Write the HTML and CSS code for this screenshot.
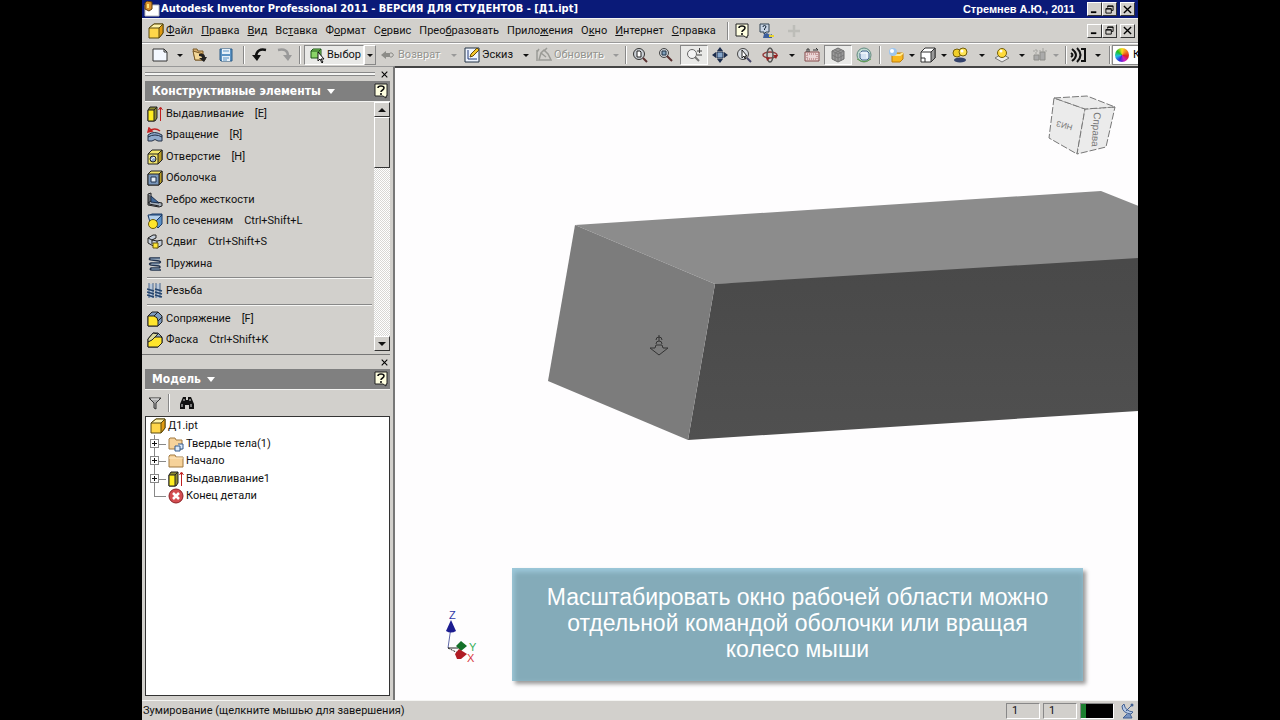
FILE: index.html
```html
<!DOCTYPE html>
<html lang="ru">
<head>
<meta charset="utf-8">
<title>Autodesk Inventor Professional 2011</title>
<link rel="stylesheet" href="styles.css">
</head>
<body>
<svg class="defs" aria-hidden="true">
  <symbol id="part" viewBox="0 0 16 16"><path d="M1 5l5-4h9v9l-4 5H1z" fill="#ffd64a" stroke="#5a4a10"/><path d="M1 5l5-4h9l-4 4z" fill="#fff3a8" stroke="#5a4a10"/><path d="M11 5l4-4v9l-4 5z" fill="#e09a10" stroke="#5a4a10"/></symbol>
  <symbol id="extrude" viewBox="0 0 16 16"><path d="M1 4l2-3h7v11l-2 3H1z" fill="#8d8a30" stroke="#222"/><path d="M1 4h6v11H1z" fill="#ffee20" stroke="#222"/><path d="M7 4l3-3" stroke="#222"/><path d="M13.500 15V2M11.500 4l2-3 2 3" fill="none" stroke="#c02020"/></symbol>
  <symbol id="help" viewBox="0 0 14 16"><path d="M1 1h12v12h-1v2l-3-2H1z" fill="#ffffe0" stroke="#222"/><path d="M4 5q0-2 3-2t3 2q0 1-2 2.500Q7 8 7 9M7 10v2" fill="none" stroke="#111" stroke-width="1.600"/></symbol>
  <symbol id="min" viewBox="0 0 10 10"><path d="M1 8h6" stroke="#000" stroke-width="2"/></symbol>
  <symbol id="restore" viewBox="0 0 10 10"><path d="M3 3V1h6v5H7M3 1.500h6M1 4h6v5H1zM1 4.500h6" fill="none" stroke="#000"/></symbol>
  <symbol id="close" viewBox="0 0 10 10"><path d="M1 1l8 8M9 1L1 9" stroke="#000" stroke-width="1.500"/></symbol>
  <symbol id="folder" viewBox="0 0 16 16"><path d="M1 3l1-1h5l1 2h7v10H1z" fill="#f6d29a" stroke="#a07840"/><path d="M1 5h14" stroke="#ffe9c4"/></symbol>
</svg>
<div class="app">
  <header class="titlebar">
    <svg class="i16" viewBox="0 0 16 16"><path d="M1 4h14v11H1z" fill="#fff" stroke="#bbb"/><path d="M1 2l2-2 5 1v7l-3 2-4-2z" fill="#d9902c" stroke="#5b3a10"/><path d="M3 3h2v4H3z" fill="#ffe27a"/></svg>
    <h1>Autodesk Inventor Professional 2011 - ВЕРСИЯ ДЛЯ СТУДЕНТОВ - [Д1.ipt]</h1>
    <span class="author">Стремнев А.Ю., 2011</span>
    <div class="winbtns">
      <button aria-label="Свернуть"><svg><use href="#min"/></svg></button><button aria-label="Восстановить"><svg><use href="#restore"/></svg></button><button class="last" aria-label="Закрыть"><svg><use href="#close"/></svg></button>
    </div>
  </header>

  <nav class="menubar">
    <svg class="i16"><use href="#part"/></svg>
    <div class="menus">
      <button><u>Ф</u>айл</button><button><u>П</u>равка</button><button><u>В</u>ид</button><button>Вс<u>т</u>авка</button><button>Ф<u>о</u>рмат</button><button>С<u>е</u>рвис</button><button>Прео<u>б</u>разовать</button><button>Прило<u>ж</u>ения</button><button>О<u>к</u>но</button><button><u>И</u>нтернет</button><button><u>С</u>правка</button>
    </div>
    <i class="sep"></i>
    <button class="w20" aria-label="Справка"><svg class="i16"><use href="#help"/></svg></button>
    <button class="w28" aria-label="Поиск справки"><svg class="i16" viewBox="0 0 16 16"><path d="M2 1h9v8H8l-2 2V9H2z" fill="#c8d4e4" stroke="#345"/><path d="M5 4q0-1.500 1.500-1.500T8 4L6.500 6v1" fill="none" stroke="#123"/><path d="M5 15l1-4 3-1 3 2 2-1v4z" fill="#3d5f9c"/><path d="M11 13h5" stroke="#e8d430" stroke-width="2"/></svg></button>
    <button class="w28" aria-label="Добавить" disabled><svg class="i16" viewBox="0 0 16 16"><path d="M8 2v12M2 8h12" stroke="#bdbdb8" stroke-width="2.500"/></svg></button>
    <div class="winbtns push">
      <button aria-label="Свернуть документ"><svg><use href="#min"/></svg></button><button aria-label="Восстановить документ"><svg><use href="#restore"/></svg></button><button class="last" aria-label="Закрыть документ"><svg><use href="#close"/></svg></button>
    </div>
  </nav>

  <div class="toolbar" role="toolbar">
    <button class="w24" aria-label="Создать"><svg class="i16" viewBox="0 0 16 16"><path d="M1 2h11l3 3v9H1z" fill="#f4f8ff" stroke="#333"/><path d="M12 2v3h3" fill="none" stroke="#333"/></svg></button>
    <button class="w16 arr" aria-label="Варианты создания"></button>
    <button class="w24" aria-label="Открыть"><svg class="i16" viewBox="0 0 16 16"><path d="M1 2h4l1 2h5v3l2 6H3z" fill="#d8b070" stroke="#7a5a28"/><path d="M3 13L1 4l10 3 2 6z" fill="#f4d898" stroke="#7a5a28"/><path d="M7 7q6-1 6 3h2l-3 5-5-4h3q0-2-3-2z" fill="#222"/></svg></button>
    <button class="w28" aria-label="Сохранить"><svg class="i16" viewBox="0 0 16 16"><path d="M2 2h12v12H3l-1-1z" fill="#5b93c4" stroke="#2c5c88"/><path d="M4 2h8v5H4zM4 9h8v5H4z" fill="#e6f0f8"/><path d="M5 4h6M5 11h6M5 13h4" stroke="#5b93c4"/></svg></button>
    <i class="sep"></i>
    <button class="w24" aria-label="Отменить"><svg class="i16" viewBox="0 0 16 16"><path d="M14 3Q5 1 4 9" fill="none" stroke="#111" stroke-width="2.500"/><path d="M0 8h9l-4 6z" fill="#111"/></svg></button>
    <button class="w24" aria-label="Повторить" disabled><svg class="i16" viewBox="0 0 16 16"><path d="M2 3q10-2 10 6" fill="none" stroke="#999" stroke-width="2.500"/><path d="M7 8h9l-4 6z" fill="#999"/></svg></button>
    <i class="sep"></i>
    <button class="w60 on txt"><svg class="i16" viewBox="0 0 16 16"><path d="M2 4l2-2h8v7l-2 2H2z" fill="#8ad468" stroke="#1b5515"/><path d="M2 4h8v7M10 4l2-2" fill="none" stroke="#1b5515"/><path d="M9 5v9l2-2 2 4 1-1-2-3h3z" fill="#fff" stroke="#111"/></svg>Выбор</button>
    <button class="w12 arr raised" aria-label="Варианты выбора"></button>
    <button class="w72 txt" disabled><svg class="i16" viewBox="0 0 16 16"><path d="M1 8l5-4v2h4v4H6v2z" fill="#8c8c88"/><path d="M10 6h2q3 2 0 4h-2" fill="none" stroke="#8c8c88"/></svg>Возврат</button>
    <button class="w12 arr" aria-label="Варианты возврата" disabled></button>
    <button class="w60 txt"><svg class="i16" viewBox="0 0 16 16"><path d="M1 1h14v14H1z" fill="#eef4ff" stroke="#234"/><path d="M4 3v9h9" fill="none" stroke="#223a78"/><path d="M6 10l1-3 6-6 2 2-6 6z" fill="#f7c72c" stroke="#654b08"/></svg>Эскиз</button>
    <button class="w12 arr" aria-label="Варианты эскиза"></button>
    <button class="w76 txt" disabled><svg class="i16" viewBox="0 0 16 16"><path d="M1 3v11M3 13l2-7 3-3 4 4 3 6zH3M5 6l5 4M9 3l2-2M3 2L1 5" fill="none" stroke="#9b9b96" stroke-width="1.500"/></svg>Обновить</button>
    <button class="w16 arr" aria-label="Варианты обновления" disabled></button>
    <i class="sep s4"></i>
    <button class="w24" aria-label="Показать все"><svg class="i16" viewBox="0 0 16 16"><circle cx="7" cy="7" r="5.500" fill="#c9ced4" stroke="#333"/><path d="M5 4h3l1 1v5H5z" fill="#fff" stroke="#222"/><path d="M11 11l4 4" stroke="#5a3030" stroke-width="2"/></svg></button>
    <button class="w28" aria-label="Показать рамку"><svg class="i16" viewBox="0 0 16 16"><circle cx="6" cy="6" r="4.500" fill="#c9ced4" stroke="#444"/><path d="M4 4h4v4H4z" fill="#7f9fba" stroke="#234"/><path d="M9 9l5 5" stroke="#5a3030" stroke-width="2"/></svg></button>
    <button class="w28 on" aria-label="Зумирование"><svg class="i16" viewBox="0 0 16 16"><circle cx="6" cy="7" r="4.500" fill="#f4f4f4" stroke="#666"/><path d="M9 10l4 4" stroke="#777" stroke-width="2"/><path d="M11 4h5M13.500 1v5M11 8h5" stroke="#444"/></svg></button>
    <button class="w24" aria-label="Панорамирование"><svg class="i16" viewBox="0 0 16 16"><path d="M8 0l3 4H5zM8 16l3-4H5zM0 8l4-3v6zM16 8l-4-3v6z" fill="#1b2c4c"/><path d="M5 5h6v6H5z" fill="#86a7cc" stroke="#1b2c4c"/></svg></button>
    <button class="w24" aria-label="Показать объект"><svg class="i16" viewBox="0 0 16 16"><circle cx="7" cy="7" r="5.500" fill="#d9dde2" stroke="#444"/><path d="M6 3v8l2-2 1 3 1-1-1-2h2z" fill="#fff" stroke="#222"/><path d="M11 11l4 4" stroke="#446" stroke-width="2"/></svg></button>
    <button class="w28" aria-label="Орбита"><svg class="i16" viewBox="0 0 16 16"><ellipse cx="8" cy="8" rx="7" ry="3" fill="none" stroke="#943e3e" stroke-width="1.500"/><ellipse cx="8" cy="8" rx="3" ry="7" fill="none" stroke="#555" stroke-width="1.500"/><path d="M11 8h5l-2 4zM4 10l4 1-3 3z" fill="#922"/></svg></button>
    <button class="w16 arr" aria-label="Варианты орбиты"></button>
    <button class="w24" aria-label="Вид на объект"><svg class="i16" viewBox="0 0 16 16"><path d="M1 5h14v9H1z" fill="#e9d5d5" stroke="#854a4a"/><path d="M3 7h10v5H3z" fill="none" stroke="#a66" stroke-dasharray="1 1"/><path d="M3 5V2h2v3M9 3h5l-2-2" fill="none" stroke="#333"/></svg></button>
    <button class="w28 on" aria-label="Тонирование"><svg class="i16" viewBox="0 0 16 16"><path d="M8 1l6 3v8l-6 3-6-3V4z" fill="#999" stroke="#6c6c6c"/><path d="M2 4l6 3 6-3M8 7v8M2 8l6 3 6-3M5 3l6 3v8M11 3L5 6v8" fill="none" stroke="#777"/></svg></button>
    <button class="w24" aria-label="Перспектива"><svg class="i16" viewBox="0 0 16 16"><circle cx="8" cy="8" r="7" fill="#bfdad0" stroke="#638a80"/><path d="M4 6l2-2h5l2 2v5l-2 2H6l-2-2z" fill="#d4e2f2" stroke="#48668c"/><path d="M4 6h7v5" fill="none" stroke="#fff"/><path d="M1 12q7 5 14 0" fill="none" stroke="#5c9c4c"/></svg></button>
    <i class="sep"></i>
    <button class="w24" aria-label="Цвета"><svg class="i16" viewBox="0 0 16 16"><path d="M4 8l3-2h8v6l-3 3H4z" fill="#f8b820" stroke="#bd7d08"/><path d="M4 8h8l3-2" fill="none" stroke="#ffe890" stroke-width="2"/><circle cx="5" cy="5" r="4" fill="#9dc5ee"/><circle cx="4" cy="4" r="2" fill="#fff"/></svg></button>
    <button class="w8 arr" aria-label="Варианты цвета"></button>
    <button class="w24" aria-label="Проекция"><svg class="i16" viewBox="0 0 16 16"><path d="M1 5l4-4h10v10l-4 4H1z" fill="#fff" stroke="#333"/><path d="M11 5l4-4v10l-4 4z" fill="#999" stroke="#333"/><path d="M1 5h10M1 11h4v4" fill="none" stroke="#333"/></svg></button>
    <button class="w8 arr" aria-label="Варианты проекции"></button>
    <button class="w24" aria-label="Тени"><svg class="i16" viewBox="0 0 16 16"><ellipse cx="8" cy="13" rx="6" ry="2.500" fill="#33426c"/><circle cx="5" cy="6" r="4" fill="#f2cf28" stroke="#735e0a"/><circle cx="11" cy="5" r="4" fill="#ffe554" stroke="#735e0a"/><circle cx="10" cy="4" r="1.500" fill="#fff"/></svg></button>
    <button class="w20 arr" aria-label="Варианты теней"></button>
    <button class="w20" aria-label="Отражения"><svg class="i16" viewBox="0 0 16 16"><path d="M1 11l7-4 7 4-7 4z" fill="#eee" stroke="#777"/><circle cx="8" cy="6" r="4.500" fill="#ffdb3c" stroke="#735e0a"/><circle cx="7" cy="4" r="1.500" fill="#fff"/></svg></button>
    <button class="w20 arr" aria-label="Варианты отражений"></button>
    <button class="w16" aria-label="Компоненты" disabled><svg class="i16" viewBox="0 0 16 16"><path d="M2 8h5v5H2zM8 5h5v8H8z" fill="#aaa" stroke="#8d8d89"/><path d="M1 4h14M4 2v5M11 1v4" stroke="#a4a4a0" stroke-dasharray="2 1"/></svg></button>
    <button class="w16 arr" aria-label="Варианты компонентов" disabled></button>
    <i class="sep s4"></i>
    <button class="w20" aria-label="Анализ"><svg class="i16" viewBox="0 0 16 16"><path d="M1 6q3 2 0 4M2 2q8 6 0 12M11 2h4v12h-4" fill="none" stroke="#111" stroke-width="2"/><path d="M7 1q7 7 0 14" fill="none" stroke="#111" stroke-width="2"/></svg></button>
    <button class="w20 arr" aria-label="Варианты анализа"></button>
    <i class="sep s4"></i>
    <div class="combo"><span class="wheel"></span><select aria-label="Цвет детали"><option>К</option></select></div>
  </div>

  <div class="main">
    <aside class="side">
      <section class="panel">
        <div class="grip"><i></i><button aria-label="Закрыть панель"><svg><use href="#close"/></svg></button></div>
        <header class="phead"><button class="ptitle">Конструктивные элементы</button><button class="phelp" aria-label="Справка по панели"><svg><use href="#help"/></svg></button></header>
        <div class="scroller">
          <div class="feats">
            <button><svg class="i16"><use href="#extrude"/></svg>Выдавливание<kbd>[E]</kbd></button>
            <button><svg class="i16" viewBox="0 0 16 16"><path d="M1 8q6-5 14 0v6h-4q-3-3-6 0H1z" fill="#8faacb" stroke="#222f45"/><path d="M1 10q7-4 14 0" fill="none" stroke="#222f45"/><path d="M2 4q6-4 11 0M1 5l1-4 3 3z" fill="none" stroke="#c32222" stroke-width="1.500"/></svg>Вращение<kbd>[R]</kbd></button>
            <button><svg class="i16" viewBox="0 0 16 16"><path d="M1 5l4-4h10v10l-4 4H1z" fill="#f3e66b" stroke="#222"/><path d="M11 5l4-4v10l-4 4z" fill="#ba9c23" stroke="#222"/><path d="M1 5h10" stroke="#222"/><circle cx="6" cy="10" r="3" fill="#8ca7c8" stroke="#222"/><path d="M4 11q2-4 4-2" fill="none" stroke="#fff"/></svg>Отверстие<kbd>[H]</kbd></button>
            <button><svg class="i16" viewBox="0 0 16 16"><path d="M1 4l3-3h11v11l-3 3H1z" fill="#f1e26a" stroke="#222"/><path d="M12 4l3-3v11l-3 3z" fill="#ba9c23" stroke="#222"/><path d="M1 4h11v11H1z" fill="#7896bb" stroke="#222"/><path d="M4 7h5v5H4z" fill="#e4edf6" stroke="#1e304c"/></svg>Оболочка</button>
            <button><svg class="i16" viewBox="0 0 16 16"><path d="M1 2l3-1v8l11 2v3l-3 1-11-2z" fill="#a7b0ba" stroke="#222"/><path d="M4 4l8 7-8-1z" fill="#446c9c" stroke="#1e304c"/><path d="M1 11l3-2M2 3v9l10 2" fill="none" stroke="#222"/></svg>Ребро жесткости</button>
            <button><svg class="i16" viewBox="0 0 16 16"><path d="M1 3l4-2h10v10l-4 4z" fill="#5d92c8" stroke="#1b3a66"/><path d="M1 2h14L4 13z" fill="#b3d0ec" stroke="#1b3a66"/><circle cx="6" cy="11" r="4.500" fill="#ffe52c" stroke="#6b5a0c"/></svg>По сечениям<kbd>Ctrl+Shift+L</kbd></button>
            <button><svg class="i16" viewBox="0 0 16 16"><path d="M1 4l5-3h3v3L5 6l5 1 5-1v5l-5 3-9-5z" fill="#c4cedb" stroke="#222"/><path d="M1 4l4 2v4M10 7v4" fill="none" stroke="#222"/><path d="M6 9h5v5H6z" fill="#ffe83a" stroke="#6b5a0c"/></svg>Сдвиг<kbd>Ctrl+Shift+S</kbd></button>
            <button><svg class="i16" viewBox="0 0 16 16"><path d="M13 2H3q-2 2 2 2l7 1q3 1 0 2H4q-3 1 0 2l8 1q2 1 0 2H4q-2 2 1 2h9" fill="none" stroke="#22334e" stroke-width="1.500"/><path d="M4 3h9M5 8h7M5 13h7" stroke="#6c8bb0"/></svg>Пружина</button>
            <hr>
            <button><svg class="i16" viewBox="0 0 16 16"><path d="M4 1v14M11 1v14" stroke="#b7c7da" stroke-width="4"/><path d="M2 0v15M6 0v15M9 0v15M13 0v15" fill="none" stroke="#4a678c"/><path d="M0 6l7 2M0 9l7 2M0 12l7 2M8 6l7 2M8 9l7 2M8 12l7 2" fill="none" stroke="#24446d" stroke-width="1.500"/></svg>Резьба</button>
            <hr>
            <button><svg class="i16" viewBox="0 0 16 16"><path d="M1 5l4-4h6l4 4v6l-4 4H1z" fill="#7d9bbf" stroke="#222"/><path d="M1 5h6q4 1 4 5v5H1z" fill="#ffe52c" stroke="#222"/><path d="M7 5l4-4M11 10l4-4" stroke="#222"/></svg>Сопряжение<kbd>[F]</kbd></button>
            <button><svg class="i16" viewBox="0 0 16 16"><path d="M1 7l5-6h5l4 4v6l-4 4H1z" fill="#8eabc9" stroke="#222"/><path d="M1 10l5-5h8l1 1v5l-4 4H1z" fill="#ffe52c" stroke="#222"/><path d="M1 10V7l5-6 5 1-6 6z" fill="#d9d99c" stroke="#222"/></svg>Фаска<kbd>Ctrl+Shift+K</kbd></button>
          </div>
          <div class="sbar"><button class="up" aria-label="Вверх"></button><span class="thumb"></span><button class="down" aria-label="Вниз"></button></div>
        </div>
      </section>
      <section class="panel model">
        <div class="grip"><button aria-label="Закрыть браузер"><svg><use href="#close"/></svg></button></div>
        <header class="phead"><button class="ptitle">Модель</button><button class="phelp" aria-label="Справка по модели"><svg><use href="#help"/></svg></button></header>
        <div class="mtools">
          <button class="w20" aria-label="Фильтр"><svg class="i16" viewBox="0 0 16 16"><path d="M2 3h12L9 8v6l-2-1V8z" fill="#aaa" stroke="#333"/><path d="M4 4h8" stroke="#eee"/></svg></button>
          <i class="sep"></i>
          <button class="w28" aria-label="Найти"><svg class="i16" viewBox="0 0 16 16"><path d="M4 2h3v3h2V2h3l3 7v5h-5v-4H6v4H1V9z" fill="#111"/><path d="M3 9v3M12 9v3M5 4v2M11 4v2" stroke="#ddd"/></svg></button>
        </div>
        <ul class="tree">
          <li class="root"><svg class="i16"><use href="#part"/></svg>Д1.ipt</li>
          <li><button class="exp" aria-label="Развернуть"></button><svg class="i16" viewBox="0 0 16 16"><path d="M1 3l1-1h5l1 2h6v9H1z" fill="#f6d29a" stroke="#a07840"/><path d="M7 10h5v5H7zM10 8h5v5h-3" fill="#dce9f8" stroke="#345a8c"/></svg>Твердые тела(1)</li>
          <li><button class="exp" aria-label="Развернуть"></button><svg class="i16"><use href="#folder"/></svg>Начало</li>
          <li><button class="exp" aria-label="Развернуть"></button><svg class="i16"><use href="#extrude"/></svg>Выдавливание1</li>
          <li class="end"><svg class="i16" viewBox="0 0 16 16"><circle cx="8" cy="8" r="7" fill="#d34c50" stroke="#8c2024"/><path d="M5 5l6 6M11 5l-6 6" stroke="#fff" stroke-width="2.500"/></svg>Конец детали</li>
        </ul>
      </section>
    </aside>

    <main class="view">
      <svg class="scene" role="img" aria-label="Модель детали">
        <defs>
          <linearGradient id="gf" x1="0" y1="0" x2="0" y2="1"><stop offset="0" stop-color="#484848"/><stop offset="1" stop-color="#505050"/></linearGradient>
        </defs>
        <path d="M180 157L706 123 1106 283V190L320 216z" fill="#8c8c8c"/>
        <path d="M320 216L1100 168V320L293 372z" fill="url(#gf)"/>
        <path d="M180 157L320 216 293 372 153 313z" fill="#7c7c7c"/>
        <g fill="none" stroke="#333"><path d="M264 267v6M261 272q0-3 3-3t3 3M261 276q0-3 3-3t3 3M261 277h6l1 3h5l-9 7-9-7h5z"/></g>
        <g fill="#ebebeb" stroke="#777" stroke-dasharray="7 2"><path d="M659 30L690 41 682 86 654 70z"/><path d="M690 41L720 39 711 79 682 86z"/><path d="M659 30L692 28 720 39 690 41z"/></g>
        <text class="cube small" transform="translate(678 57) rotate(195)" x="0" y="0">НИЗ</text>
        <text class="cube" transform="translate(699 44) rotate(94)" x="0" y="0">Справа</text>
        <path d="M53 580l3-21" stroke="#6068a8"/><path d="M51 563l5-11 5 11q-5 3-10 0z" fill="#1c1c90"/>
        <path d="M53 580h10" stroke="#222"/><path d="M61 578l5-5 6 5-6 5z" fill="#147028"/>
        <path d="M53 580l10 5" stroke="#222" stroke-dasharray="2 1"/><path d="M60 586l4-5 8 5-6 5h-4z" fill="#b01c24"/>
        <text class="ax" x="54" y="551" fill="#3038a8">Z</text><text class="ax" x="74" y="583" fill="#35b05a">Y</text><text class="ax" x="72" y="594" fill="#d83840">X</text>
      </svg>
      <p class="callout">Масштабировать окно рабочей области можно отдельной командой оболочки или вращая колесо мыши</p>
    </main>
  </div>

  <footer class="status">
    <span class="msg">Зумирование (щелкните мышью для завершения)</span>
    <span class="cell">1</span><span class="cell">1</span><span class="meter"></span>
    <svg class="i16" viewBox="0 0 16 16"><path d="M2 3q0 7 9 8L13 9Q5 8 4 1z" fill="#b9cce8" stroke="#405f92"/><path d="M6 8l6-6M7 11l-4 4h9l-2-4" fill="#7894c0" stroke="#405f92"/><circle cx="12" cy="2" r="1.500" fill="#405f92"/></svg>
  </footer>
</div>
</body>
</html>
```

FILE: styles.css
```css
* { box-sizing: border-box; }
body { margin: 0; background: #000; color: #111; font: 11px/14px Roboto, sans-serif; }
button { margin: 0; padding: 0; border: 0; background: none; color: inherit; font: inherit; }
.defs { position: absolute; width: 0; height: 0; }
.i16 { width: 16px; height: 16px; flex: none; }

.app { display: flex; flex-direction: column; height: 100vh; margin: 0 142px; background: #d2d0cc; overflow: hidden; }

.titlebar { display: flex; align-items: center; height: 18px; padding: 0 2px; background: #0a1a78; color: #fff; flex: none; }
.titlebar h1 { flex: 1; margin: 0 0 0 1px; font: bold 11px/16px "DejaVu Sans Condensed", sans-serif; white-space: nowrap; }
.author { margin-right: 12px; font: bold 11px/16px "Liberation Sans", sans-serif; }
.winbtns { display: flex; margin-right: 1px; }
.winbtns button { display: grid; place-items: center; width: 15px; height: 14px; background: #d2d0cc; border: 1px solid; border-color: #fff #333 #333 #fff; }
.winbtns .last { margin-left: 3px; }
.winbtns svg { width: 9px; height: 9px; }
.winbtns.push { margin-left: auto; margin-right: 3px; }

.menubar { display: flex; align-items: center; height: 25px; padding-left: 6px; border-top: 1px solid #f4f4f2; border-bottom: 1px solid #999; flex: none; }
.menus { display: flex; gap: 8px; margin: 0 8px 0 2px; }
.menus button { white-space: nowrap; }
.menubar button, .toolbar button, .mtools button { display: flex; align-items: center; justify-content: center; flex: none; }

.toolbar { display: flex; align-items: center; height: 23px; padding-left: 6px; border-top: 1px solid #fff; flex: none; }
.toolbar button { height: 20px; }
.toolbar button:disabled { color: #94948f; text-shadow: 1px 1px #fff; }
.toolbar .txt { justify-content: flex-start; padding-left: 4px; gap: 2px; white-space: nowrap; }
.toolbar .on { background: #e9e9e7; border: 1px solid; border-color: #888 #fff #fff #888; }
.raised { border: 1px solid; border-color: #fff #888 #888 #fff; }
.w8 { width: 8px; } .w12 { width: 12px; } .w16 { width: 16px; } .w20 { width: 20px; } .w24 { width: 24px; } .w28 { width: 28px; }
.w60 { width: 60px; } .w72 { width: 72px; } .w76 { width: 76px; }
.arr::after, .up::after, .down::after { content: ""; border: 3px solid transparent; border-top-color: #111; border-bottom: 0; }
.up::after, .down::after { border-width: 4px 4px 0; }
.arr:disabled::after { border-top-color: #999; }
.sep { width: 8px; height: 18px; flex: none; background: linear-gradient(90deg, transparent 3px, #888 3px, #888 4px, #fff 4px, #fff 5px, transparent 5px); }
.s4 { width: 4px; background: linear-gradient(90deg, transparent 1px, #888 1px, #888 2px, #fff 2px, #fff 3px, transparent 3px); }
.combo { display: flex; align-items: center; flex: 1; min-width: 0; height: 20px; overflow: hidden; background: #fff; border: 1px solid #888; border-right: 0; }
.combo select { appearance: none; width: 20px; padding: 0; border: 0; background: none; font: inherit; flex: none; }
.wheel { width: 14px; height: 14px; margin: 0 4px 0 2px; flex: none; border-radius: 50%; background: conic-gradient(#f8e020, #f08020, #e02020, #d020c0, #3030e0, #20c0e0, #20c020, #f8e020); }

.main { display: flex; flex: 1; min-height: 0; }
.side { display: flex; flex-direction: column; width: 253px; flex: none; border-top: 1px solid #999; border-right: 2px solid #777; padding-right: 3px; }
.panel { padding-left: 3px; }
.grip { display: flex; align-items: center; justify-content: flex-end; height: 14px; }
.grip i { flex: 1; height: 4px; margin-right: 4px; border: 1px solid #888; border-width: 1px 0; background: #f4f4f2; }
.grip button { display: grid; place-items: center; width: 11px; height: 12px; }
.grip svg { width: 7px; height: 7px; }
.phead { display: flex; align-items: center; height: 21px; padding: 0 2px 0 7px; background: #808080; color: #fff; border-bottom: 1px solid #f4f4f2; }
.ptitle { display: flex; align-items: center; gap: 6px; margin-right: auto; font: bold 12px/14px "DejaVu Sans Condensed", sans-serif; }
.ptitle::after { content: ""; border: 4px solid transparent; border-top: 5px solid #fff; border-bottom: 0; }
.phelp { width: 14px; height: 16px; }
.phelp svg { width: 14px; height: 16px; display: block; }
.scroller { display: flex; }
.feats { display: flex; flex-direction: column; flex: 1; height: 249px; padding: 1px 2px 0; }
.feats button { display: flex; align-items: center; flex: 1; gap: 3px; text-align: left; }
.feats kbd { margin-left: 8px; font: inherit; }
.feats hr { width: 100%; height: 2px; margin: 2px 0; border: 0; border-top: 1px solid #888; border-bottom: 1px solid #f6f6f4; }
.sbar { display: flex; flex-direction: column; width: 16px; background: repeating-conic-gradient(#fff 0 25%, #d8d7d4 0 50%) 0 0 / 2px 2px; }
.sbar button, .thumb { display: grid; place-items: center; height: 15px; background: #d2d0cc; border: 1px solid; border-color: #fff #333 #333 #fff; }
.up::after { transform: rotate(180deg); }
.sbar .thumb { height: 51px; }
.sbar .down { margin-top: auto; }

.model { display: flex; flex-direction: column; flex: 1; min-height: 0; margin-top: 3px; padding-bottom: 4px; border-top: 1px solid #777; }
.mtools { display: flex; align-items: center; height: 26px; }
.tree { flex: 1; margin: 0; padding: 0 4px; list-style: none; background: #fff; border: 1px solid #333; }
.tree li { position: relative; display: flex; align-items: center; gap: 2px; height: 18px; padding-left: 18px; }
.tree li:nth-child(even) { height: 17px; }
.tree .root { padding-left: 0; }
.tree li:not(.root)::before { content: ""; position: absolute; left: 4px; top: 0; width: 11px; height: 50%; border-left: 1px solid #888; border-bottom: 1px solid #888; }
.tree li:not(.root):not(.end)::after { content: ""; position: absolute; left: 4px; top: 50%; height: 50%; border-left: 1px solid #888; }
.exp { position: absolute; z-index: 1; left: 0; top: 4px; width: 9px; height: 9px; border: 1px solid #888; background: linear-gradient(#111, #111) center / 5px 1px no-repeat, linear-gradient(#111, #111) center / 1px 5px no-repeat, #fff; }

.view { position: relative; flex: 1; min-width: 0; background: #fefdfe; border-top: 2px solid #444; overflow: hidden; }
.scene { position: absolute; left: 0; top: 0; width: 100%; height: 100%; }
.cube { font: 10px "Liberation Sans", sans-serif; fill: #777; }
.cube.small { font-size: 8px; }
.ax { font: 11px "Liberation Sans", sans-serif; }
.callout { position: absolute; left: 117px; right: 55px; bottom: 19px; margin: 0; padding: 16px 20px 19px; background: #84abb9; color: #fff; text-align: center; font: 23px/26px "Liberation Sans", sans-serif; box-shadow: 3px 3px 4px #999, inset 0 5px 5px -1px #9cc8da, inset 4px 0 4px -1px #98c0d0; }

.status { display: flex; align-items: center; gap: 3px; height: 20px; padding: 0 2px 0 1px; border-top: 1px solid #f4f4f2; flex: none; }
.msg { flex: 1; white-space: nowrap; }
.cell, .meter { width: 34px; height: 16px; padding-left: 5px; border: 1px solid; border-color: #888 #fff #fff #888; }
.meter { background: linear-gradient(90deg, #1c8030 5px, #000 5px); margin-right: 3px; }
```
